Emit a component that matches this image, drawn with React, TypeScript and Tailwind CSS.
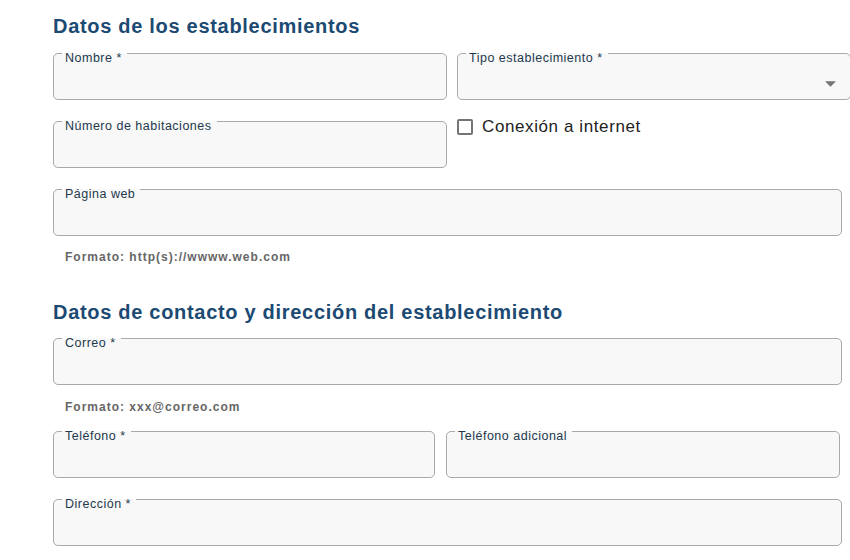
const font = { fontFamily: '"Liberation Sans", Arial, sans-serif' }

function Field({ label, className, select }: { label: string; className: string; select?: boolean }) {
  return (
    <fieldset
      className={`relative shrink-0 rounded-[5px] border border-[#a9a9a9] bg-[#f8f8f8] px-[8px] ${className}`}
    >
      <legend className="pl-[3px] pr-[5px] text-[12.5px] leading-[8px] tracking-[0.5px] text-[#23384d]">
        <span className="relative top-[5px]">{label}</span>
      </legend>
      <div className="h-[42px]" />
      {select && (
        <svg
          className="absolute right-[14px] top-[24px] h-[6px] w-[11px]"
          viewBox="0 0 10 5"
          fill="#757575"
        >
          <path d="M0 0h10L5 5z" />
        </svg>
      )}
    </fieldset>
  )
}

function Hint({ children }: { children: string }) {
  return (
    <p className="pl-[12px] text-[12px] font-bold leading-[16px] tracking-[1px] text-[#666]">
      {children}
    </p>
  )
}

function Heading({ children }: { children: string }) {
  return (
    <h2 className="text-[20px] font-bold leading-[24px] tracking-[0.7px] text-[#1c4a72]">
      {children}
    </h2>
  )
}

export default function App() {
  return (
    <div style={font} className="h-[560px] w-[850px] overflow-hidden bg-white pl-[53px] pt-[14px]">
      <Heading>Datos de los establecimientos</Heading>

      <div className="mt-[11px] flex gap-[10px]">
        <Field label="Nombre *" className="w-[394px]" />
        <Field label="Tipo establecimiento *" className="w-[394px]" select />
      </div>

      <div className="mt-[17px] flex gap-[10px]">
        <Field label="Número de habitaciones" className="w-[394px]" />
        <label className="mt-[2px] flex h-[16px] items-start gap-[9px]">
          <span className="h-[16px] w-[16px] rounded-[2px] border-2 border-[#757575] bg-white" />
          <span className="-mt-[2px] text-[17px] leading-[20px] tracking-[0.6px] text-[#222]">
            Conexión a internet
          </span>
        </label>
      </div>

      <div className="mt-[17px]">
        <Field label="Página web" className="w-[789px]" />
      </div>
      <div className="mt-[13px]">
        <Hint>Formato: http(s)://wwww.web.com</Hint>
      </div>

      <div className="mt-[35px]">
        <Heading>Datos de contacto y dirección del establecimiento</Heading>
      </div>

      <div className="mt-[10px]">
        <Field label="Correo *" className="w-[789px]" />
      </div>
      <div className="mt-[14px]">
        <Hint>Formato: xxx@correo.com</Hint>
      </div>

      <div className="mt-[12px] flex gap-[11px]">
        <Field label="Teléfono *" className="w-[382px]" />
        <Field label="Teléfono adicional" className="w-[394px]" />
      </div>

      <div className="mt-[17px]">
        <Field label="Dirección *" className="w-[789px]" />
      </div>
    </div>
  )
}
